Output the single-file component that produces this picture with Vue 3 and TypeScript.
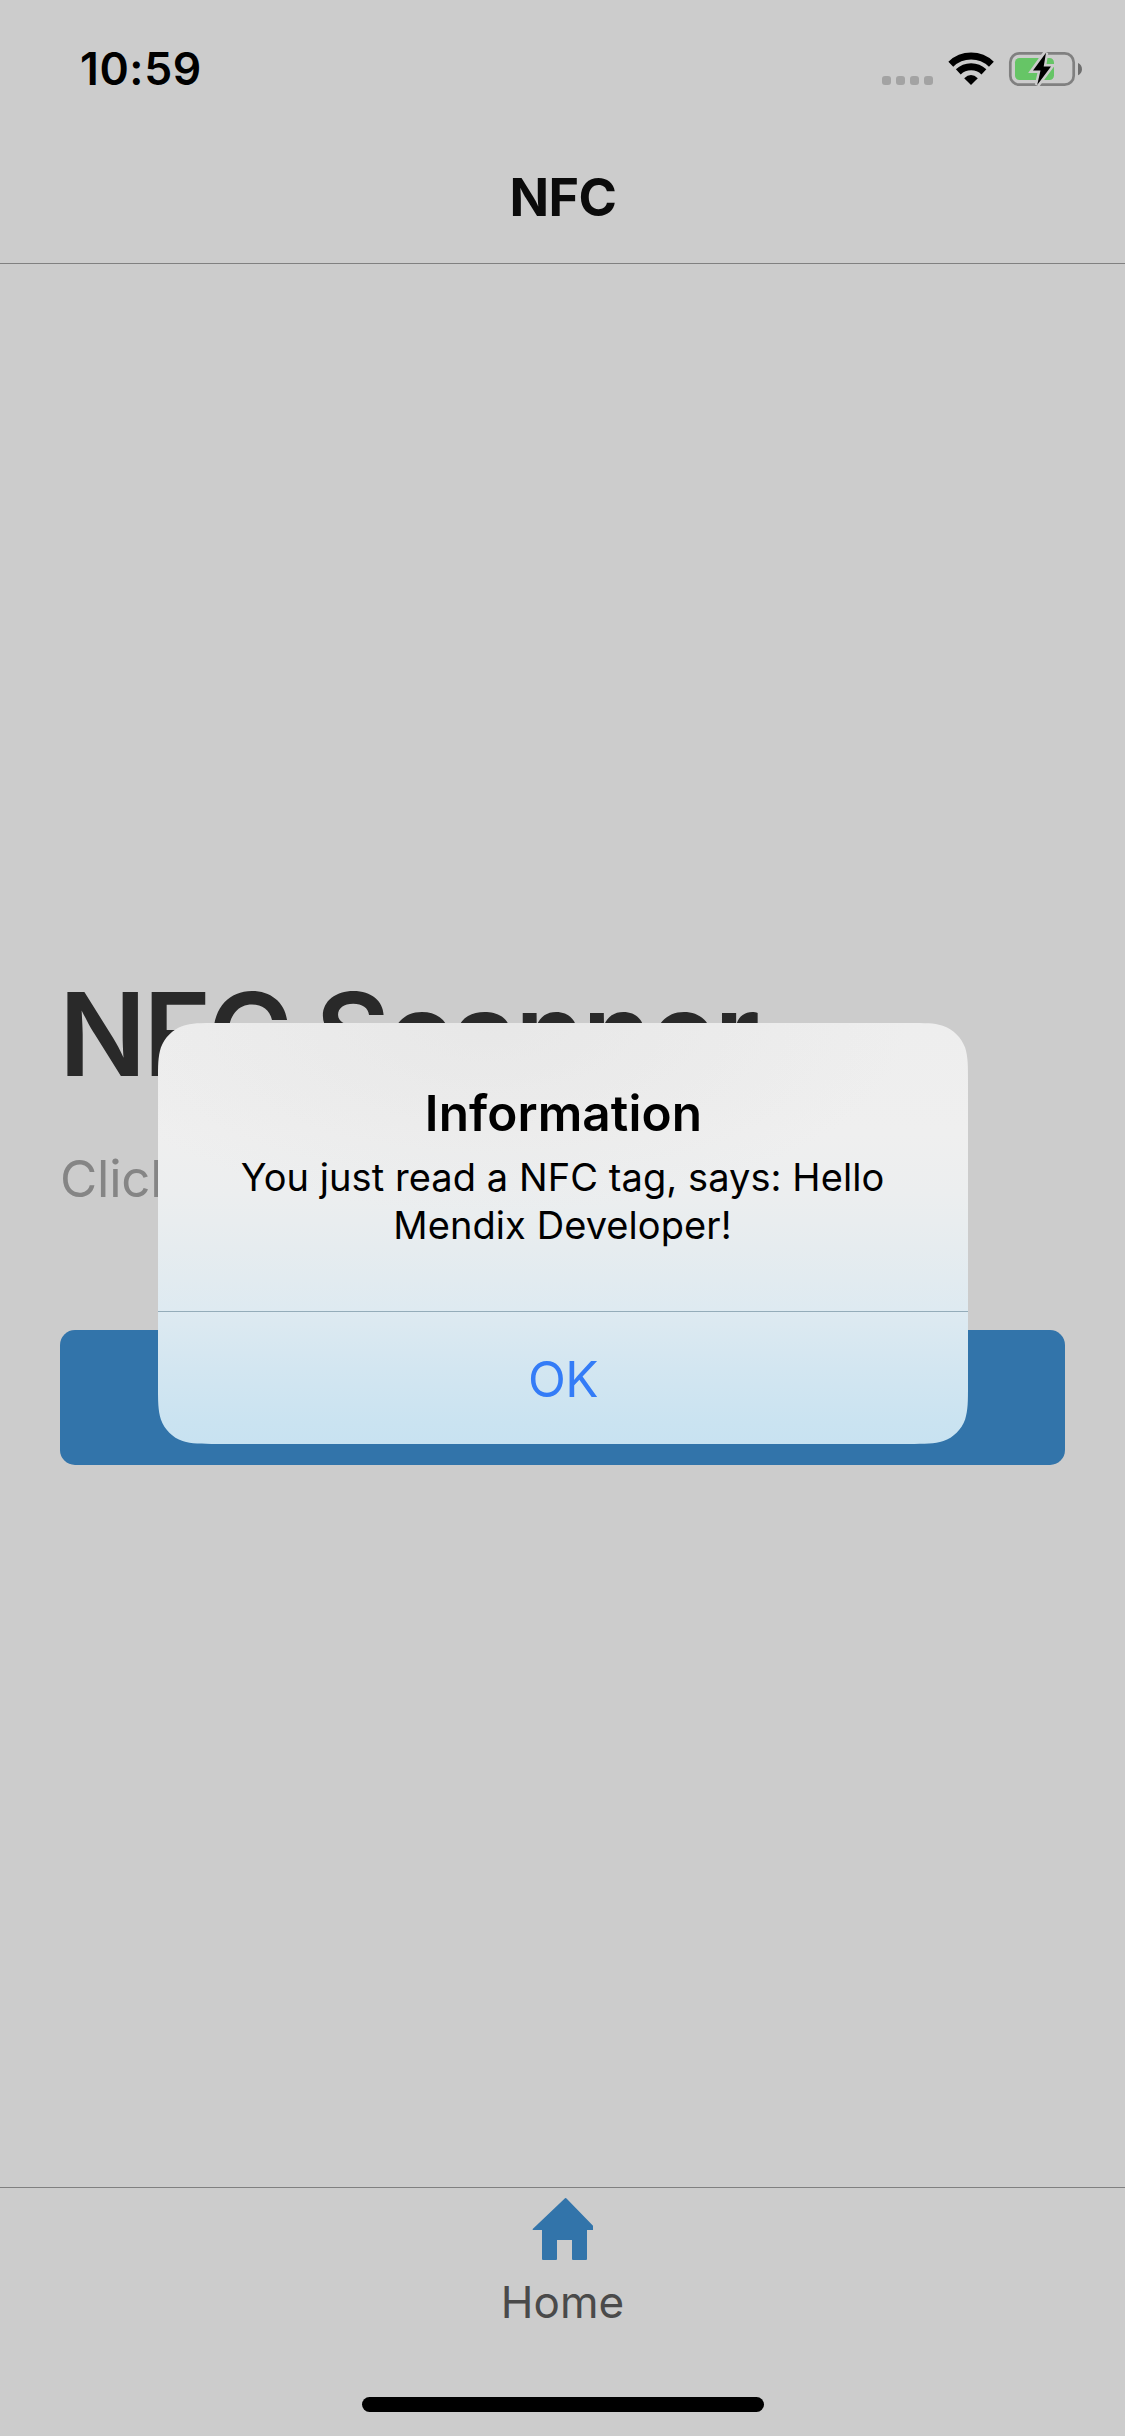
<script setup lang="ts">
interface Alert {
  title: string
  message: string
  action: string
}

const time = '10:59'
const pageTitle = 'NFC'
const heading = 'NFC Scanner'
const hint = 'Click'
const tabs: string[] = ['Home']
const alert: Alert = {
  title: 'Information',
  message: 'You just read a NFC tag, says: Hello Mendix Developer!',
  action: 'OK',
}
const signalDots: number[] = [882, 896, 910, 924]
</script>

<template>
  <div class="screen">
    <div class="status-bar">
      <span class="time">{{ time }}</span>
      <svg class="status-icons" viewBox="880 50 204 38" width="204" height="38">
        <rect v-for="x in signalDots" :key="x" :x="x" y="76" width="9" height="9" rx="3" fill="#a3a3a3" />
        <g fill="none" stroke="#000">
          <path d="M950.8 64.2A29.3 29.3 0 0 1 991.4 64.2" stroke-width="7" />
          <path d="M958.3 71.9A18.5 18.5 0 0 1 983.9 71.9" stroke-width="7" />
        </g>
        <path d="M964.2 78.2Q971 71.6 977.8 78.2L971 85Z" />
        <rect x="1010.3" y="53.3" width="63.4" height="31.4" rx="9" fill="none" stroke="#808080" stroke-width="2.7" />
        <rect x="1015" y="58" width="39" height="22" rx="4.5" fill="#66c566" />
        <path d="M1078 63C1083.3 65.2 1083.3 73 1078 75.3Z" fill="#6e6e6e" />
        <path
          d="M1045.7 52.7L1033 70.5H1040.5L1037.3 85L1051 66.4H1043.7Z"
          fill="none"
          stroke="#cccccc"
          stroke-width="5"
        />
        <path d="M1046 52.7L1033 70.5H1040.5L1037.2 85L1051 66.4H1043.7Z" />
      </svg>
    </div>

    <header class="nav-bar">{{ pageTitle }}</header>

    <main class="content">
      <h1 class="heading">{{ heading }}</h1>
      <p class="hint">{{ hint }}</p>
      <button class="scan-button" type="button"></button>
    </main>

    <nav class="tab-bar">
      <div v-for="tab in tabs" :key="tab" class="tab">
        <svg class="tab-icon" viewBox="0 0 62 62" width="62" height="62">
          <path
            d="M33 0.2Q34 -0.2 35 1L61 27.7V32H55V61Q55 62 54 62H41Q40 62 40 61V42H25V61Q25 62 24 62H11Q10 62 10 61V32H0.7V31Z"
            fill="#3274aa"
          />
        </svg>
        <span>{{ tab }}</span>
      </div>
      <div class="home-indicator"></div>
    </nav>

    <section class="alert" role="alertdialog">
      <div class="alert-body">
        <h2 class="alert-title">{{ alert.title }}</h2>
        <p class="alert-message">{{ alert.message }}</p>
      </div>
      <button class="alert-action" type="button">{{ alert.action }}</button>
    </section>
  </div>
</template>

<style>
body {
  margin: 0;
  background: #cccccc;
}
</style>

<style scoped>
.screen {
  position: relative;
  display: flex;
  flex-direction: column;
  box-sizing: border-box;
  width: 1125px;
  height: 2436px;
  overflow: hidden;
  background: #cccccc;
  font-family: Inter, "Liberation Sans", sans-serif;
}

h1,
h2,
p {
  margin: 0;
}

button {
  border: 0;
  padding: 0;
  font-family: inherit;
}

.status-bar {
  display: flex;
  align-items: center;
  justify-content: space-between;
  box-sizing: border-box;
  height: 132px;
  padding: 6px 41px 0 80px;
}

.time {
  font-size: 44.5px;
  font-weight: 600;
  line-height: 54px;
  letter-spacing: 0.6px;
  color: #000;
}

.nav-bar {
  box-sizing: border-box;
  height: 132px;
  padding-left: 1px;
  border-bottom: 1px solid #808080;
  font-size: 52px;
  font-weight: 700;
  line-height: 131px;
  letter-spacing: -0.5px;
  text-align: center;
  color: #0b0b0b;
}

.content {
  display: flex;
  flex: 1;
  flex-direction: column;
  padding: 701px 60px 0;
}

.heading {
  margin-left: -1px;
  font-size: 115px;
  font-weight: 600;
  line-height: 140px;
  letter-spacing: -3.1px;
  color: #292929;
}

.hint {
  margin-top: 44px;
  font-size: 51px;
  line-height: 60px;
  letter-spacing: -0.2px;
  color: #858585;
}

.scan-button {
  height: 135px;
  margin-top: 121px;
  border-radius: 15px;
  background: #3274aa;
}

.tab-bar {
  display: flex;
  flex-direction: column;
  align-items: center;
  box-sizing: border-box;
  height: 249px;
  border-top: 1px solid #808080;
}

.tab {
  display: flex;
  flex-direction: column;
  align-items: center;
  padding-top: 10px;
  font-size: 44px;
  line-height: 54px;
  color: #4a4a4a;
}

.tab-icon {
  margin: 0 0 15px 1px;
}

.home-indicator {
  width: 402px;
  height: 15px;
  margin-top: 68px;
  border-radius: 7.5px;
  background: #000;
}

.alert {
  position: absolute;
  top: 1023px;
  left: 158px;
  display: flex;
  flex-direction: column;
  width: 810px;
  height: 421px;
  background:
    radial-gradient(ellipse 420px 190px at 330px 0, rgba(222, 222, 222, 0.4), rgba(222, 222, 222, 0)),
    linear-gradient(180deg, #eeeeee 0, #efefef 110px, #eceeef 170px, #e6ecef 225px, #deeaf1 287px, #d3e6f1 345px, #cae3f1 400px, #c8e2f1 421px);
  clip-path: path("M59.6 0H750.4C767.5 0 776.1 0 783.9 2.55L785.4 2.9C795.5 6.6 803.4 14.5 807.1 24.6C810 33.9 810 42.5 810 59.6V361.4C810 378.5 810 387.1 807.1 396.4C803.4 406.5 795.5 414.4 785.4 418.1C776.1 421 767.5 421 750.4 421H59.6C42.5 421 33.9 421 24.6 418.1C14.5 414.4 6.6 406.5 2.9 396.4C0 387.1 0 378.5 0 361.4V59.6C0 42.5 0 33.9 2.9 24.6C6.6 14.5 14.5 6.6 24.6 2.9C33.9 0 42.5 0 59.6 0Z");
}

.alert-body {
  box-sizing: border-box;
  height: 289px;
  padding: 60px 70px 0;
  border-bottom: 1px solid #94acb9;
  text-align: center;
  color: #000;
}

.alert-title {
  padding-left: 1px;
  font-size: 49.5px;
  font-weight: 600;
  line-height: 60px;
  letter-spacing: 0.1px;
}

.alert-message {
  margin-top: 10px;
  padding-right: 1px;
  font-size: 38px;
  line-height: 48px;
  letter-spacing: 0.07px;
}

.alert-action {
  flex: 1;
  padding: 2px 0 0;
  background: none;
  font-size: 49.5px;
  line-height: 60px;
  letter-spacing: -0.5px;
  color: #347cf7;
}
</style>
